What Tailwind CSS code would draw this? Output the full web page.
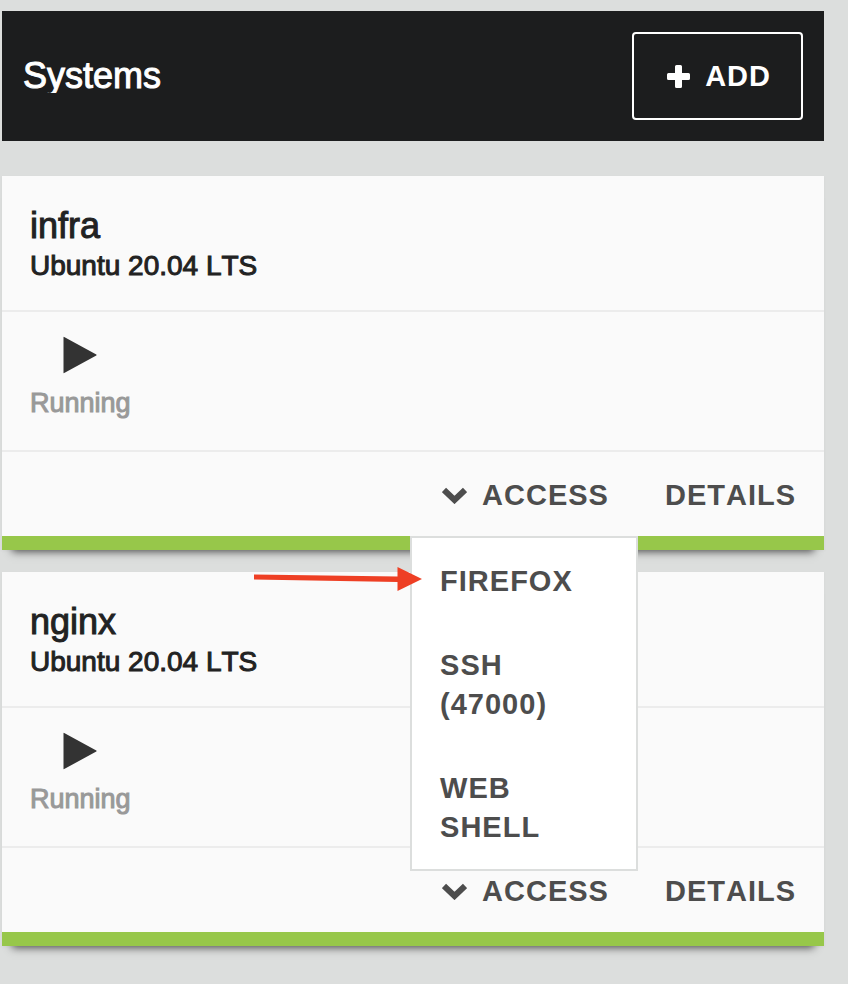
<!DOCTYPE html>
<html lang="en">
<head>
<meta charset="utf-8">
<meta name="viewport" content="width=device-width, initial-scale=1">
<title>Systems</title>
<script src="https://cdn.jsdelivr.net/npm/@tailwindcss/browser@4"></script>
</head>
<body class="min-h-screen bg-[#dcdedd] pt-[11px] pr-6 pb-9 pl-[2px] font-['Liberation_Sans',Arial,sans-serif] text-[#222] [font-kerning:none]">
  <header class="flex items-center justify-between bg-[#1c1d1e] p-[21px] text-white">
    <h1 class="overflow-hidden text-[36px] leading-[34px] [-webkit-text-stroke:1px_currentColor]">Systems</h1>
    <button type="button" class="flex h-[88px] items-center gap-[15px] rounded-sm border-2 border-white pr-[30px] pl-[33px] text-[29px] font-bold tracking-[1px]">
      <svg class="size-[23px]" viewBox="0 0 23 23" fill="currentColor" aria-hidden="true"><path d="M9.5 0h4a1.500 1.500 0 0 1 1.500 1.500V8h6.500A1.500 1.500 0 0 1 23 9.500v4a1.500 1.500 0 0 1-1.500 1.500H15v6.500a1.500 1.500 0 0 1-1.500 1.500h-4A1.500 1.500 0 0 1 8 21.500V15H1.500A1.500 1.500 0 0 1 0 13.500v-4A1.500 1.500 0 0 1 1.500 8H8V1.500A1.500 1.500 0 0 1 9.500 0z"/></svg>
      <span class="pt-[2px]">ADD</span>
    </button>
  </header>

  <main class="mt-[35px] flex flex-col gap-[22px]">
    <article class="relative z-10 border-b-[14px] border-[#97c74a] bg-[#fafafa] shadow-[0_12px_8px_-10px_#555,0_1px_3px_rgba(0,0,0,0.04)]">
      <div class="px-7 pt-[30px] pb-[24px]">
        <h2 class="text-[36px] leading-[40px] [-webkit-text-stroke:1px_currentColor]">infra</h2>
        <p class="text-[28px] leading-[40px] [-webkit-text-stroke:1px_currentColor]">Ubuntu 20.04 LTS</p>
      </div>
      <div class="flex h-[140px] border-t-2 border-[#ececec] px-7 pt-6">
        <div class="flex flex-col items-center">
          <svg class="h-[38px] w-[34px]" viewBox="0 0 34 38" fill="#333" aria-hidden="true"><path d="M.5 1.300Q.5.600 1.200 1L33.300 18.400q.700.600 0 1.200L1.200 37Q.5 37.400.5 36.700z"/></svg>
          <p class="mt-[13px] text-[27px] leading-[32px] text-[#999] [-webkit-text-stroke:1px_currentColor]">Running</p>
        </div>
      </div>
      <div class="flex justify-end border-t-2 border-[#ececec] text-[29px] font-bold tracking-[1px] text-[#4d4d4d]">
        <div class="relative">
          <button type="button" aria-expanded="true" aria-controls="infra-access" class="flex h-[84px] items-center gap-[15px] pt-[2px] pr-[29px] pl-8 tracking-[1px]">
            <svg class="h-[17px] w-[25px]" viewBox="0 0 25 17" fill="none" stroke="currentColor" stroke-width="6" aria-hidden="true"><path d="M2 3l10.500 10L23 3"/></svg>
            <span class="pt-[2px]">ACCESS</span>
          </button>
          <ul id="infra-access" class="absolute top-full left-0 w-full border-2 border-[#dcdedd] bg-white pb-px leading-[39px]">
            <li><a href="#firefox" class="block px-7 pt-6 pb-[21px]">FIREFOX</a></li>
            <li><a href="#ssh" class="block px-7 pt-6 pb-[21px]">SSH (47000)</a></li>
            <li><a href="#shell" class="block px-7 pt-6 pb-[21px]">WEB SHELL</a></li>
          </ul>
          <svg class="absolute top-full right-[216px] mt-[31px] h-6 w-[168px]" viewBox="0 0 168 24" fill="#ee3f24" aria-hidden="true"><path d="M0 7.500L143.500 9.500V0L168 12 143.500 24V14.900L0 12.500z"/></svg>
        </div>
        <button type="button" class="h-[84px] pt-1 pr-7 pl-[27px] tracking-[1px]">DETAILS</button>
      </div>
    </article>

    <article class="border-b-[14px] border-[#97c74a] bg-[#fafafa] shadow-[0_12px_8px_-10px_#555,0_1px_3px_rgba(0,0,0,0.04)]">
      <div class="px-7 pt-[30px] pb-[24px]">
        <h2 class="text-[36px] leading-[40px] [-webkit-text-stroke:1px_currentColor]">nginx</h2>
        <p class="text-[28px] leading-[40px] [-webkit-text-stroke:1px_currentColor]">Ubuntu 20.04 LTS</p>
      </div>
      <div class="flex h-[140px] border-t-2 border-[#ececec] px-7 pt-6">
        <div class="flex flex-col items-center">
          <svg class="h-[38px] w-[34px]" viewBox="0 0 34 38" fill="#333" aria-hidden="true"><path d="M.5 1.300Q.5.600 1.200 1L33.300 18.400q.700.600 0 1.200L1.200 37Q.5 37.400.5 36.700z"/></svg>
          <p class="mt-[13px] text-[27px] leading-[32px] text-[#999] [-webkit-text-stroke:1px_currentColor]">Running</p>
        </div>
      </div>
      <div class="flex justify-end border-t-2 border-[#ececec] text-[29px] font-bold tracking-[1px] text-[#4d4d4d]">
        <button type="button" aria-expanded="false" class="flex h-[84px] items-center gap-[15px] pt-[2px] pr-[29px] pl-8 tracking-[1px]">
          <svg class="h-[17px] w-[25px]" viewBox="0 0 25 17" fill="none" stroke="currentColor" stroke-width="6" aria-hidden="true"><path d="M2 3l10.500 10L23 3"/></svg>
          <span class="pt-[2px]">ACCESS</span>
        </button>
        <button type="button" class="h-[84px] pt-1 pr-7 pl-[27px] tracking-[1px]">DETAILS</button>
      </div>
    </article>
  </main>
</body>
</html>
